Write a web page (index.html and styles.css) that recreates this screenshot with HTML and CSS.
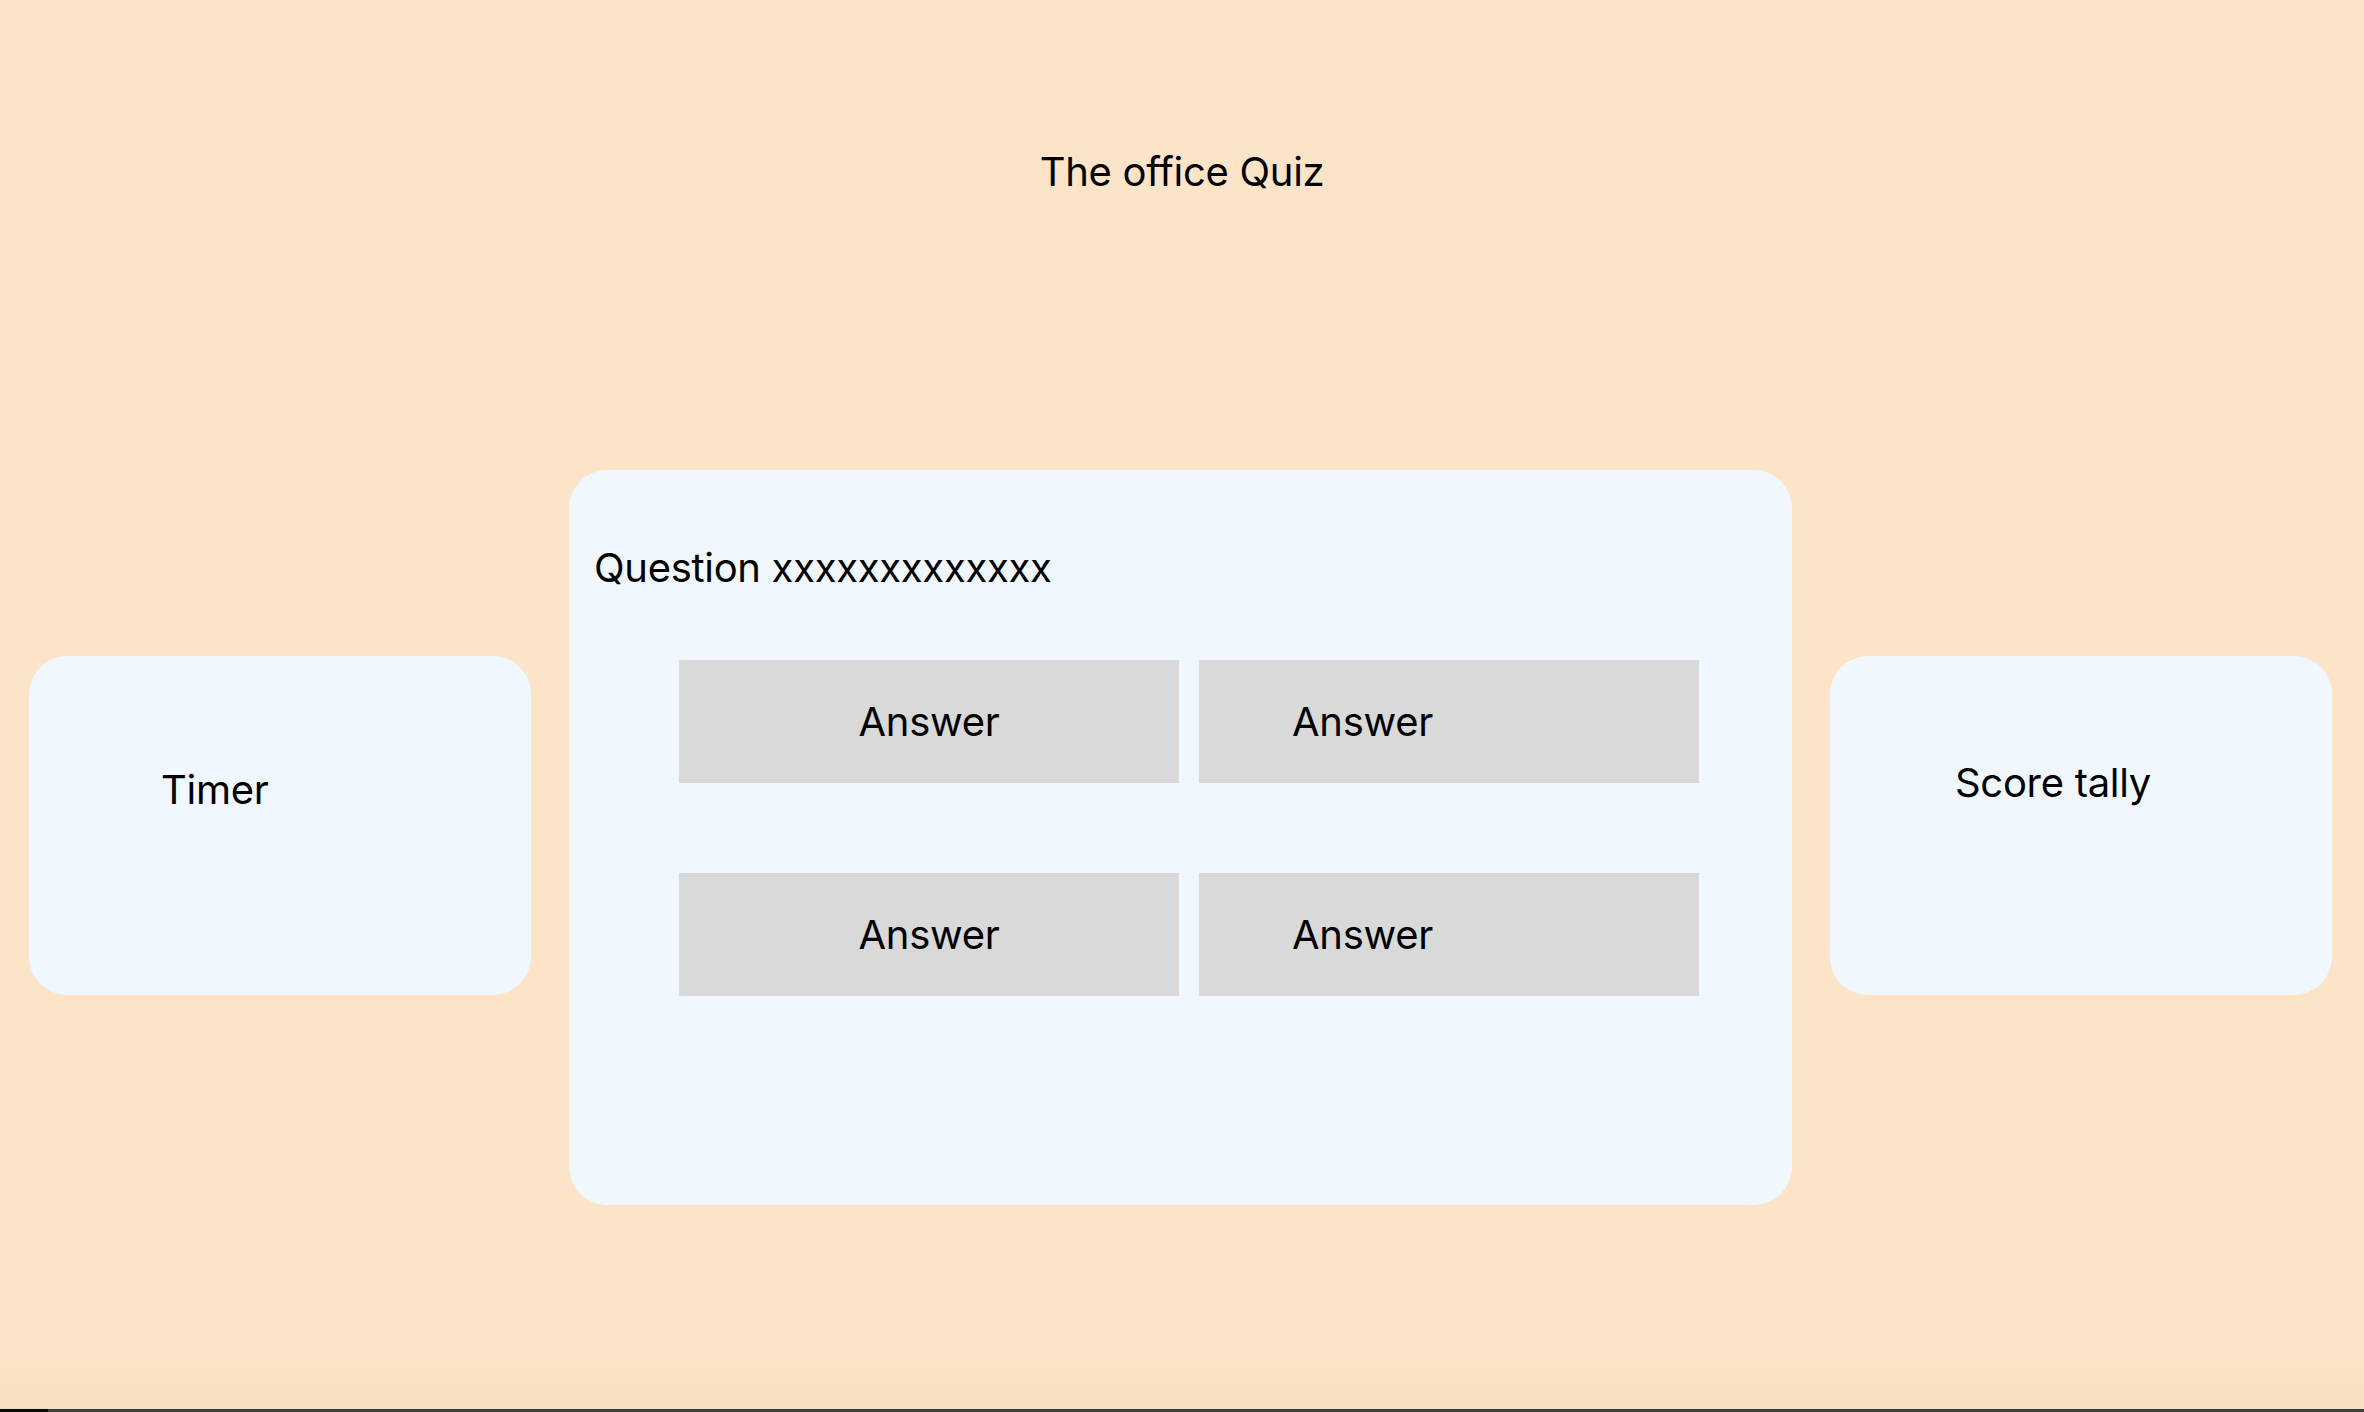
FILE: index.html
```html
<!DOCTYPE html>
<html lang="en">
<head>
<meta charset="utf-8">
<title>The office Quiz</title>
<link rel="stylesheet" href="styles.css">
</head>
<body>
<main class="page">
  <h1 class="title">The office Quiz</h1>
  <div class="board">
    <section class="side-card timer">
      <p class="label">Timer</p>
    </section>
    <section class="quiz-card">
      <p class="question">Question xxxxxxxxxxxxx</p>
      <div class="answers">
        <button class="answer answer-center">Answer</button>
        <button class="answer answer-left">Answer</button>
        <button class="answer answer-center">Answer</button>
        <button class="answer answer-left">Answer</button>
      </div>
    </section>
    <section class="side-card score">
      <p class="label">Score tally</p>
    </section>
  </div>
</main>
<div class="taskbar"><span class="taskbar-start"></span></div>
</body>
</html>
```

FILE: styles.css
```css
html, body {
  height: 100%;
}

body {
  margin: 0;
  display: flex;
  flex-direction: column;
  background: #fce4c8;
  font-family: Inter, "Noto Sans", "Liberation Sans", sans-serif;
  letter-spacing: -0.3px;
  color: #000;
}

.page {
  flex: 1;
  background: linear-gradient(to bottom, #fce4c8 0, #fce4c8 calc(100% - 60px), #f8dec0 100%);
}

.title {
  margin: 0;
  padding-top: 148px;
  font-size: 40px;
  line-height: 48px;
  font-weight: 400;
  text-align: center;
}

.board {
  display: flex;
  align-items: flex-start;
  gap: 38px;
  padding: 274px 32px 0 29px;
}

.side-card {
  flex: 0 0 502px;
  height: 339px;
  margin-top: 186px;
  background: #f0f7fe;
  border-radius: 38px;
  box-sizing: border-box;
}

.label {
  margin: 0;
  font-size: 40px;
  line-height: 48px;
}

.timer {
  padding: 110px 0 0 132px;
}

.score {
  padding: 103px 0 0 125px;
}

.quiz-card {
  flex: 1;
  height: 735px;
  background: #f0f7fe;
  border-radius: 38px;
  box-sizing: border-box;
  padding: 74px 0 0 25px;
}

.question {
  margin: 0;
  font-size: 40px;
  line-height: 48px;
}

.answers {
  display: grid;
  grid-template-columns: 500px 500px;
  grid-auto-rows: 123px;
  column-gap: 20px;
  row-gap: 90px;
  margin: 68px 0 0 85px;
}

.answer {
  display: flex;
  align-items: center;
  border: 0;
  margin: 0;
  padding: 0;
  background: #d9d9d9;
  font-family: inherit;
  letter-spacing: inherit;
  font-size: 40px;
  line-height: 48px;
  color: #000;
}

.answer-center {
  justify-content: center;
}

.answer-left {
  justify-content: flex-start;
  padding-left: 93px;
}

.taskbar {
  height: 3px;
  background: #3d3d3d;
  display: flex;
}

.taskbar-start {
  width: 48px;
  background: #0a0a0a;
}
```
